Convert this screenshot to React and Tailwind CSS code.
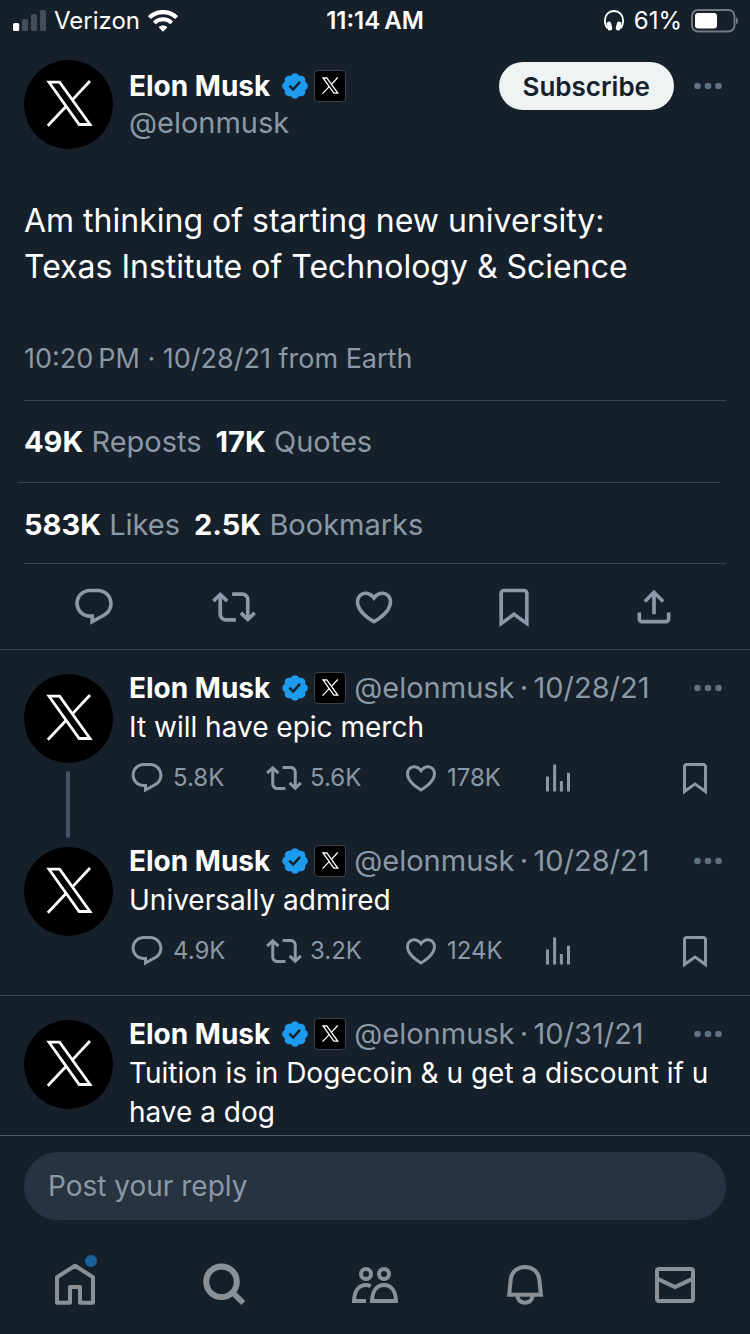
import React from "react";

const PATHS = {
  reply:
    "M1.751 10c0-4.42 3.584-8 8.005-8h4.366c4.49 0 8.129 3.64 8.129 8.13 0 2.96-1.607 5.68-4.196 7.11l-8.054 4.46v-3.69h-.067c-4.49.1-8.183-3.51-8.183-8.01zm8.005-6c-3.317 0-6.005 2.69-6.005 6 0 3.37 2.77 6.08 6.138 6.01l.351-.01h1.761v2.3l5.087-2.81c1.951-1.08 3.163-3.13 3.163-5.36 0-3.39-2.744-6.13-6.129-6.13H9.756z",
  repost:
    "M4.5 3.88l4.432 4.14-1.364 1.46L5.5 7.55V16c0 1.1.896 2 2 2H13v2H7.5c-2.209 0-4-1.79-4-4V7.55L1.432 9.48.068 8.02 4.5 3.88zM16.5 6H11V4h5.5c2.209 0 4 1.79 4 4v8.45l2.068-1.93 1.364 1.46-4.432 4.14-4.432-4.14 1.364-1.46 2.068 1.93V8c0-1.1-.896-2-2-2z",
  like: "M16.697 5.5c-1.222-.06-2.679.51-3.89 2.16l-.805 1.09-.806-1.09C9.984 6.01 8.526 5.44 7.304 5.5c-1.243.07-2.349.78-2.91 1.91-.552 1.12-.633 2.78.479 4.82 1.074 1.97 3.257 4.27 7.129 6.61 3.87-2.34 6.052-4.64 7.126-6.61 1.111-2.04 1.03-3.7.477-4.82-.561-1.13-1.666-1.84-2.908-1.91zm4.187 7.69c-1.351 2.48-4.001 5.12-8.379 7.67l-.503.3-.504-.3c-4.379-2.55-7.029-5.19-8.382-7.67-1.36-2.5-1.41-4.86-.514-6.67.887-1.79 2.647-2.91 4.601-3.01 1.651-.09 3.368.56 4.798 2.01 1.429-1.45 3.146-2.1 4.796-2.01 1.954.1 3.714 1.22 4.601 3.01.896 1.81.846 4.17-.514 6.67z",
  bookmark:
    "M4 4.5C4 3.12 5.119 2 6.5 2h11C18.881 2 20 3.12 20 4.5v18.44l-8-5.71-8 5.71V4.5zM6.5 4c-.276 0-.5.22-.5.5v14.56l6-4.29 6 4.29V4.5c0-.28-.224-.5-.5-.5h-11z",
  share:
    "M12 2.59l5.7 5.7-1.41 1.42L13 6.41V16h-2V6.41l-3.3 3.3-1.41-1.42L12 2.59zM21 15l-.02 3.51c0 1.38-1.12 2.49-2.5 2.49H5.5C4.11 21 3 19.88 3 18.5V15h2v3.5c0 .28.22.5.5.5h12.98c.28 0 .5-.22.5-.5L19 15h2z",
  views: "M8.75 21V3h2v18h-2zM18 21V8.5h2V21h-2zM4 21l.004-10h2L6 21H4zm9.248 0v-7h2v7h-2z",
};

function Icon({ name, className }) {
  return (
    <svg viewBox="0 0 24 24" fill="currentColor" className={className} aria-hidden="true">
      <path d={PATHS[name]} />
    </svg>
  );
}

function XMark({ className, strokeWidth }) {
  return (
    <svg viewBox="0 0 89 89" fill="none" stroke="#fff" strokeWidth={strokeWidth} className={className} aria-hidden="true">
      <path d="M25 22.2H35.6L66 64.5H55.2Z" />
      <path d="M66 21 48.4 39.9M23.8 65.7 42.2 46.2" />
    </svg>
  );
}

function Avatar() {
  return (
    <span className="block size-[89px] shrink-0 rounded-full bg-black">
      <XMark className="size-full" strokeWidth="2.8" />
    </span>
  );
}

function Name() {
  return (
    <span className="flex items-center">
      <span className="text-[28px] font-bold text-white">Elon Musk</span>
      <svg viewBox="0 0 22 22" fill="#1d9bf0" className="ml-[10px] size-[30px] shrink-0" aria-label="Verified">
        <path d="M20.396 11c-.018-.646-.215-1.275-.57-1.816-.354-.54-.852-.972-1.438-1.246.223-.607.27-1.264.14-1.897-.131-.634-.437-1.218-.882-1.687-.47-.445-1.053-.75-1.687-.882-.633-.13-1.29-.083-1.897.14-.273-.587-.704-1.086-1.245-1.44S11.647 1.62 11 1.604c-.646.017-1.273.213-1.813.568s-.969.854-1.24 1.44c-.608-.223-1.267-.272-1.902-.14-.635.13-1.22.436-1.69.882-.445.47-.749 1.055-.878 1.688-.13.633-.08 1.29.144 1.896-.587.274-1.087.705-1.443 1.245-.356.54-.555 1.17-.574 1.817.02.647.218 1.276.574 1.817.356.54.856.972 1.443 1.245-.224.606-.274 1.263-.144 1.896.13.634.433 1.218.877 1.688.47.443 1.054.747 1.687.878.633.132 1.29.084 1.897-.136.274.586.705 1.084 1.246 1.439.54.354 1.17.551 1.816.569.647-.016 1.276-.213 1.817-.567s.972-.854 1.245-1.44c.604.239 1.266.296 1.903.164.636-.132 1.22-.447 1.68-.907.46-.46.776-1.044.908-1.681s.075-1.299-.165-1.903c.586-.274 1.084-.705 1.439-1.246.354-.54.551-1.17.569-1.816zM9.662 14.85l-3.429-3.428 1.293-1.302 2.072 2.072 4.4-4.794 1.347 1.246z" />
      </svg>
      <span className="ml-1 flex size-8 shrink-0 items-center justify-center rounded border border-[#38444d] bg-black">
        <XMark className="size-8 shrink-0" strokeWidth="3.6" />
      </span>
    </span>
  );
}

function More() {
  return (
    <button type="button" aria-label="More" className="mr-1 shrink-0 text-[#5f7080]">
      <svg viewBox="0 0 28 8" fill="currentColor" className="h-2 w-7">
        <circle cx="3.5" cy="4" r="3.3" />
        <circle cx="14" cy="4" r="3.3" />
        <circle cx="24.5" cy="4" r="3.3" />
      </svg>
    </button>
  );
}

function StatusBar() {
  return (
    <header className="grid h-10 grid-cols-[1fr_auto_1fr] items-center px-3 pt-px text-2xl text-white">
      <div className="flex items-center">
        <svg viewBox="0 0 34 22" className="h-[22px] w-[34px]" aria-label="Signal">
          <rect x="1" y="13" width="6.2" height="8" rx="1.6" fill="#fff" />
          <g fill="#454d56">
            <rect x="10" y="9" width="6" height="12" rx="1.6" />
            <rect x="19" y="4" width="6" height="17" rx="1.6" />
            <rect x="28" y="0" width="6" height="21" rx="1.6" />
          </g>
        </svg>
        <span className="ml-2">Verizon</span>
        <svg viewBox="0 0 30 22" className="ml-2 h-[22px] w-[30px]" fill="none" stroke="#fff" aria-label="Wi-Fi">
          <path d="M1.4 7.6C9 .2 21 .2 28.6 7.6" strokeWidth="4.2" />
          <path d="M6.3 12.8C11.2 8.1 18.8 8.1 23.7 12.8" strokeWidth="3.9" />
          <path d="M10.6 17.3 15 21.8 19.4 17.3C17 14.9 13 14.9 10.6 17.3Z" fill="#fff" stroke="none" />
        </svg>
      </div>
      <div className="font-semibold">11:14{"\u2009"}AM</div>
      <div className="flex items-center justify-end">
        <svg viewBox="0 0 20 21" className="h-[21px] w-5" fill="none" stroke="#fff" aria-label="Headphones">
          <path d="M3.6 18.4C1.6 16.2.9 13.4.9 10.5.9 4.8 4.8 1 10 1s9.1 3.8 9.1 9.5c0 2.9-.7 5.7-2.7 7.9" strokeWidth="1.8" />
          <rect x="3.1" y="11.6" width="4.6" height="8.9" rx="2.1" fill="#fff" stroke="none" transform="rotate(-14 5.4 16)" />
          <rect x="12.3" y="11.6" width="4.6" height="8.9" rx="2.1" fill="#fff" stroke="none" transform="rotate(14 14.6 16)" />
        </svg>
        <span className="ml-[10px]">61%</span>
        <svg viewBox="0 0 48 24" className="ml-2 h-6 w-12" aria-label="Battery">
          <rect x="2" y="1" width="42.5" height="21.5" rx="6" fill="none" stroke="#747a80" strokeWidth="1.9" />
          <rect x="5" y="4" width="22" height="15.5" rx="3" fill="#fff" />
          <path d="M46 8.2c2.7 1 2.7 6.2 0 7.2z" fill="#747a80" />
        </svg>
      </div>
    </header>
  );
}

function Stat({ value, label }) {
  return (
    <a href="#stats">
      <strong className="font-bold text-white">{value}</strong> {label}
    </a>
  );
}

function Reply({ date, text, counts, connected, className }) {
  return (
    <article className={"flex gap-4 px-6 pt-[22px] " + className}>
      <div className="flex w-[89px] shrink-0 flex-col pt-[2px]">
        <Avatar />
        {connected && <span className="-mb-4 ml-[42px] mt-2 w-1 flex-1 rounded-full bg-[#425364]" />}
      </div>
      <div className="min-w-0 flex-1">
        <div className="flex h-8 items-center text-[29px] text-[#8b98a5]">
          <Name />
          <span className="ml-2 whitespace-nowrap">@elonmusk{"\u2009"}·{"\u2009"}{date}</span>
          <span className="ml-auto flex">
            <More />
          </span>
        </div>
        <p className="mt-1 text-[28px] leading-[39px] text-white">{text}</p>
        {counts && (
          <div className="mt-[13px] grid grid-cols-[repeat(4,1fr)_36px] pr-[13px] pb-[26px] text-2xl text-[#8b98a5]">
            {["reply", "repost", "like"].map((name, i) => (
              <button key={name} type="button" aria-label={name} className="flex h-9 items-center gap-2">
                <Icon name={name} className="size-9" />
                {counts[i]}
              </button>
            ))}
            <button type="button" aria-label="views">
              <Icon name="views" className="size-9" />
            </button>
            <button type="button" aria-label="bookmark">
              <Icon name="bookmark" className="size-9" />
            </button>
          </div>
        )}
      </div>
    </article>
  );
}

const TABS = [
  {
    label: "Home",
    dot: true,
    art: <path d="M6 42.7V17.2L24 5.7 42 17.2V42.7H29V27H19V42.7Z" strokeLinejoin="round" />,
  },
  {
    label: "Search",
    art: (
      <>
        <circle cx="20.5" cy="21.7" r="15.3" strokeWidth="6" />
        <path d="M31 32 42.3 43" strokeWidth="5.6" />
      </>
    ),
  },
  {
    label: "Communities",
    art: (
      <>
        <circle cx="15" cy="14" r="5" />
        <circle cx="33" cy="14" r="5" />
        <path d="M15 41H3C3.4 31 8 25 15 25c1.8 0 3.3.4 4.7 1.2" />
        <path d="M21 41H45C44.6 31 40 25 33 25S21.4 31 21 41Z" />
      </>
    ),
  },
  {
    label: "Notifications",
    art: (
      <>
        <path d="M8.2 34.7 9.7 19.5C10.5 11.8 16.5 7 24 7S37.5 11.8 38.3 19.5L39.9 34.7Z" />
        <path d="M16.2 36C17.2 40 20.2 42.7 24 42.7S30.8 40 31.8 36" />
      </>
    ),
  },
  {
    label: "Messages",
    art: (
      <>
        <rect x="6" y="9" width="36" height="32" rx="2" />
        <path d="M6 18.6 24 27 42 18.6" />
      </>
    ),
  },
];

export default function App() {
  return (
    <div className="flex min-h-screen w-full flex-col bg-[#16202a] font-['Inter',sans-serif]">
      <StatusBar />
      <main className="flex-1">
        <section className="border-b border-[#38444d] pt-5">
          <div className="flex gap-4 px-6">
            <Avatar />
            <div className="min-w-0 flex-1 pt-[10px] text-[29px] text-[#8b98a5]">
              <div className="flex h-8 items-center">
                <Name />
              </div>
              <div className="mt-[3px] leading-9">@elonmusk</div>
            </div>
            <div className="flex h-[52px] items-center gap-5">
              <button
                type="button"
                className="h-12 rounded-full bg-[#eff3f4] px-6 text-[26px] font-semibold text-[#16202a]"
              >
                Subscribe
              </button>
              <More />
            </div>
          </div>
          <p className="mt-[49px] px-6 text-[32px] leading-[46px] text-white">
            Am thinking of starting new university:
            <br />
            Texas Institute of Technology &amp; Science
          </p>
          <div className="mt-[49px] px-6 pb-[21px] text-[27px] leading-10 text-[#8b98a5]">
            10:20{"\u2009"}PM · 10/28/21 from Earth
          </div>
          <div className="mx-6 flex h-[82px] items-center gap-[14px] border-t border-[#38444d] text-[29px] text-[#8b98a5]">
            <Stat value="49K" label="Reposts" />
            <Stat value="17K" label="Quotes" />
          </div>
          <div className="ml-[18px] mr-[30px] flex h-[81px] items-center gap-[14px] border-t border-[#38444d] pl-[6px] pt-[3px] text-[29px] text-[#8b98a5]">
            <Stat value="583K" label="Likes" />
            <Stat value="2.5K" label="Bookmarks" />
          </div>
          <div className="mx-6 border-t border-[#38444d] pr-[2px]">
            <div className="grid h-[85px] grid-cols-5 place-items-center text-[#8b98a5]">
              {["reply", "repost", "like", "bookmark", "share"].map((name) => (
                <button key={name} type="button" aria-label={name}>
                  <Icon name={name} className="size-11" />
                </button>
              ))}
            </div>
          </div>
        </section>
        <Reply
          date="10/28/21"
          text="It will have epic merch"
          counts={["5.8K", "5.6K", "178K"]}
          connected
          className="pb-px"
        />
        <Reply
          date="10/28/21"
          text="Universally admired"
          counts={["4.9K", "3.2K", "124K"]}
          className="border-b border-[#38444d]"
        />
        <Reply date="10/31/21" text="Tuition is in Dogecoin & u get a discount if u have a dog" className="pb-[3px]" />
      </main>
      <footer className="border-t border-[#4b5a66] pt-4">
        <div className="px-6">
          <input
            type="text"
            aria-label="Post your reply"
            placeholder="Post your reply"
            className="h-[68px] w-full rounded-full bg-[#273340] px-6 text-[28px] text-white placeholder:text-[#8b98a5]"
          />
        </div>
        <nav className="grid grid-cols-5 place-items-center pb-[26px] pt-10 text-[#8b8f96]">
          {TABS.map((tab) => (
            <a key={tab.label} href="#tab" aria-label={tab.label} className="relative">
              <svg viewBox="0 0 48 48" fill="none" stroke="currentColor" strokeWidth="4" className="size-12">
                {tab.art}
              </svg>
              {tab.dot && <span className="absolute -top-[5px] right-[2px] size-3 rounded-full bg-[#1a6299]" />}
            </a>
          ))}
        </nav>
      </footer>
    </div>
  );
}
